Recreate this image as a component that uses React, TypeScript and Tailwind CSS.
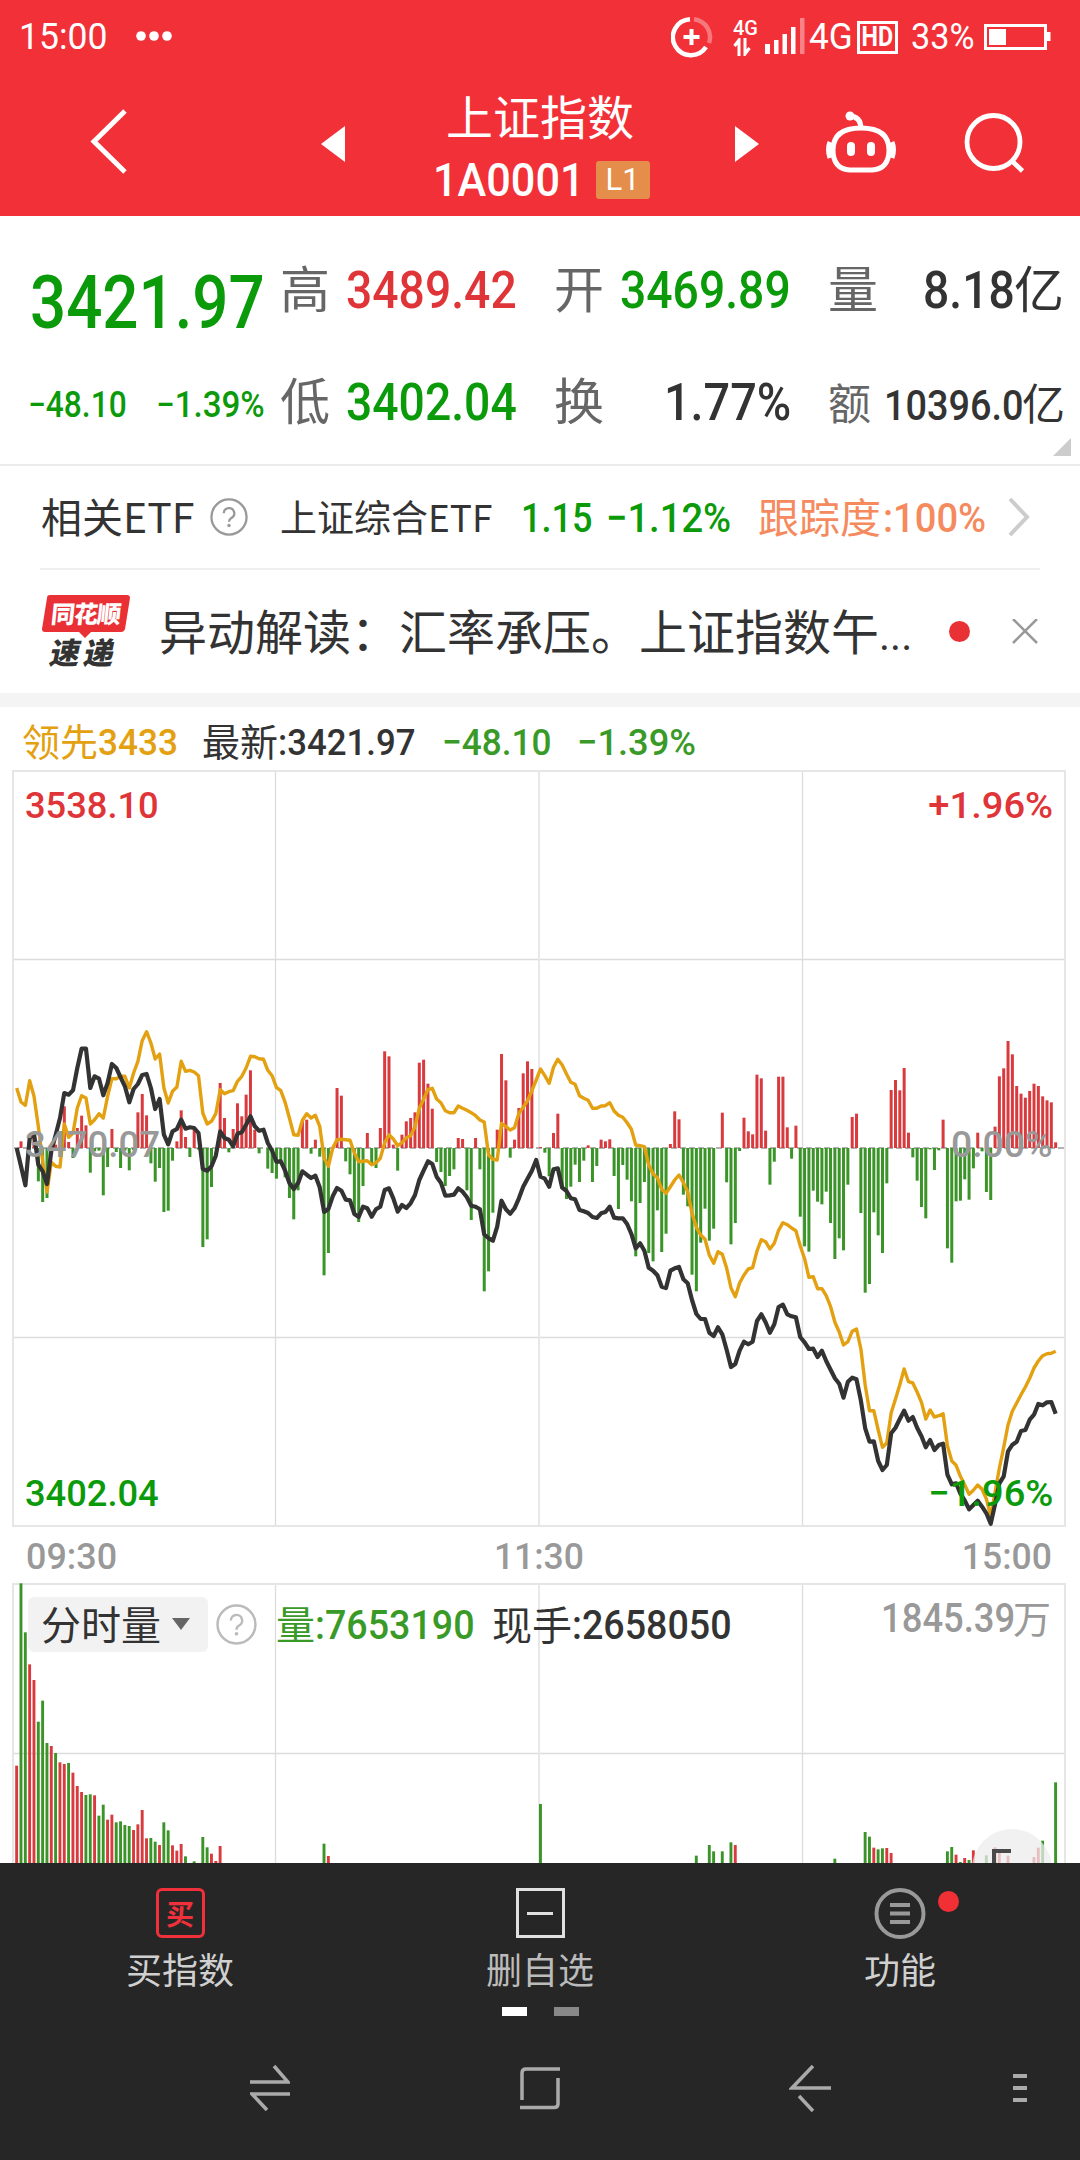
import type { ReactNode } from 'react';
import clsx from 'clsx';

const RED = '#d93a3e';
const GREEN = '#3a9428';
const STEP = 4.329;

// Offsets from the previous close, one value per trading minute, 3 units = 1px.
const momentum = [
  0, 20, 0, 0, 35, -100, -162, -150, -5, 10, 50, 125, 18, -30, 60, 97, 68, -74, -10, -8,
  -142, -57, 57, -12, -60, -8, -67, -6, 107, 162, 98, -46, -101, -60, -192, -188, -38, 20, 113, 33,
  -27, 60, -5, -297, -274, -117, 0, 195, 90, -13, 57, 134, 95, 160, 233, 55, -16, 0, -62, -75,
  -92, -40, -88, -150, -214, -127, 80, 85, -17, 25, -26, -382, -315, 0, 180, 157, -40, -79, -200, -222,
  -114, 45, -45, -60, 60, 290, 275, 10, -68, 40, 80, 90, 107, 256, 265, 193, 118, -42, -72, -114,
  -84, -64, 30, 27, -127, -216, 30, -64, -430, -370, -194, 55, 282, 203, -29, 25, 120, 224, 260, 237,
  0, 3, -14, -85, 45, 103, -120, -153, -116, -50, -102, -38, 8, -102, -54, 25, 20, 26, -84, -183,
  -51, -95, -160, -325, -165, -102, -315, -340, -187, -312, -257, 12, 110, 86, -140, -175, -380, -430, -284, -182,
  -278, -242, 0, 106, -103, -289, -225, -9, 91, 50, 41, 220, 209, 52, -110, -41, 214, 214, 62, -32,
  67, -206, -295, -311, -128, -161, -169, -131, -225, -333, -271, -307, -110, 93, 103, -195, -434, -408, -193, -262,
  -315, -106, 174, 204, 173, 240, 46, -28, -98, -177, -211, -4, -66, -7, 85, -301, -344, -160, -158, -94,
  -155, -61, 46, -10, -132, -156, 64, 215, 239, 321, 281, 186, 163, 151, 171, 193, 186, 155, 143, 137,
  17,
];

const price = [
  0, -55, -112, 30, 43, -50, -70, -108, -10, 40, 90, 165, 160, 173, 240, 298, 298, 180, 215, 208,
  158, 195, 252, 240, 212, 185, 137, 177, 192, 219, 222, 180, 117, 147, 40, 11, 50, 57, 85, 58,
  62, 60, 45, -63, -68, -55, -23, 50, 30, 25, 5, 43, 47, 70, 95, 65, 52, 55, 15, -8,
  -41, -40, -68, -105, -123, -105, -70, -80, -90, -83, -118, -192, -183, -145, -120, -128, -155, -157, -198, -207,
  -176, -181, -206, -184, -176, -126, -121, -151, -191, -171, -180, -166, -141, -96, -68, -40, -48, -86, -104, -143,
  -142, -140, -121, -131, -148, -173, -176, -184, -259, -271, -278, -236, -158, -184, -197, -181, -151, -116, -92, -68,
  -36, -86, -92, -116, -64, -61, -119, -129, -151, -154, -186, -190, -195, -207, -210, -196, -192, -176, -209, -211,
  -211, -228, -258, -301, -286, -308, -359, -368, -382, -416, -420, -368, -361, -357, -394, -406, -456, -498, -513, -513,
  -554, -564, -538, -559, -606, -657, -648, -608, -581, -589, -581, -519, -499, -523, -554, -529, -477, -470, -499, -505,
  -508, -567, -583, -603, -602, -627, -608, -639, -665, -691, -707, -749, -701, -689, -694, -758, -841, -881, -880, -939,
  -966, -951, -856, -839, -813, -788, -818, -807, -839, -865, -898, -876, -906, -891, -887, -980, -1009, -1006, -1037, -1058,
  -1084, -1071, -1058, -1076, -1096, -1127, -1068, -1006, -985, -910, -890, -881, -849, -846, -815, -800, -768, -772, -763, -762,
  -797,
];

const leading = [
  180, 138, 128, 202, 155, 65, -40, -132, -43, -55, -57, 72, 32, 45, 120, 157, 150, 72, 85, 103,
  90, 155, 208, 208, 215, 215, 180, 225, 260, 322, 349, 315, 267, 282, 180, 135, 170, 183, 260, 230,
  233, 228, 217, 105, 72, 80, 103, 175, 163, 169, 172, 200, 215, 240, 275, 274, 268, 266, 233, 217,
  182, 172, 137, 90, 40, 38, 83, 103, 90, 98, 65, -30, -55, 0, 25, 26, 25, 23, -15, -41,
  -40, -38, -50, -44, -31, 16, 40, 27, 7, 16, 31, 37, 64, 119, 146, 176, 179, 147, 136, 112,
  106, 106, 126, 119, 113, 106, 97, 84, 78, -21, -34, -36, 74, 64, 54, 61, 104, 122, 142, 172,
  204, 237, 217, 194, 242, 266, 249, 222, 197, 191, 157, 149, 143, 119, 119, 126, 127, 136, 111, 98,
  92, 76, 56, 9, 7, 4, -51, -78, -89, -124, -136, -116, -96, -81, -104, -131, -196, -238, -261, -274,
  -321, -346, -311, -319, -361, -420, -446, -405, -381, -363, -359, -309, -275, -281, -303, -286, -247, -224, -230, -240,
  -248, -293, -332, -388, -386, -422, -422, -443, -476, -523, -552, -591, -581, -550, -543, -603, -712, -788, -788, -846,
  -898, -885, -794, -753, -710, -663, -701, -705, -732, -763, -813, -786, -807, -803, -797, -893, -939, -952, -985, -1011,
  -1039, -1027, -1011, -1024, -1053, -1104, -1032, -960, -898, -831, -789, -765, -740, -717, -691, -660, -639, -623, -617, -616,
  -610,
];

// [minute, height, rising]
const volume: [number, number, number][] = [
  [0, 292, 1], [1, 839, 0], [2, 692, 0], [3, 596, 1], [4, 549, 1], [5, 424, 0], [6, 487, 0], [7, 360, 0],
  [8, 351, 1], [9, 330, 0], [10, 302, 1], [11, 297, 1], [12, 300, 0], [13, 271, 1], [14, 231, 1], [15, 213, 1],
  [16, 204, 0], [17, 206, 0], [18, 203, 1], [19, 142, 0], [20, 175, 0], [21, 130, 1], [22, 145, 1], [23, 122, 0],
  [24, 125, 0], [25, 114, 0], [26, 111, 0], [27, 99, 1], [28, 116, 1], [29, 159, 1], [30, 74, 1], [31, 75, 0],
  [32, 64, 0], [33, 54, 1], [34, 122, 0], [35, 98, 0], [36, 53, 1], [37, 37, 1], [38, 57, 1], [39, 20, 0],
  [41, 5, 0], [43, 78, 0], [44, 47, 0], [45, 28, 1], [46, 6, 1], [47, 51, 1], [71, 58, 0], [72, 21, 1],
  [121, 177, 0], [157, 22, 0], [160, 54, 0], [161, 35, 0], [163, 35, 0], [165, 62, 0], [166, 54, 1], [189, 13, 0],
  [196, 93, 0], [197, 79, 0], [198, 46, 1], [199, 41, 0], [200, 44, 0], [201, 45, 1], [202, 30, 1], [215, 35, 0],
  [216, 48, 0], [217, 25, 1], [218, 3, 0], [219, 15, 1], [220, 9, 0], [221, 38, 1], [224, 23, 0], [226, 47, 1],
  [227, 30, 1], [229, 22, 1], [235, 18, 1], [236, 46, 1], [237, 67, 0], [240, 242, 0],
];

const toPoints = (values: number[]) =>
  values.map((v, i) => `${(16.7 + i * STEP).toFixed(1)},${(378 - v / 3).toFixed(1)}`).join(' ');

function Num({ className, children }: { className?: string; children: ReactNode }) {
  return (
    <span
      className={clsx(
        'block shrink-0 origin-left whitespace-nowrap font-[Roboto,sans-serif] font-medium',
        className,
      )}
    >
      {children}
    </span>
  );
}

function StatusBar() {
  return (
    <div className="flex h-[74px] items-center pl-[19px] text-white">
      <Num className="w-[117px] scale-x-[0.96] text-[37px] !font-normal">15:00</Num>
      <svg width="36" height="12" fill="#fff">
        <circle cx="5" cy="5" r="4.800" />
        <circle cx="18" cy="5" r="4.800" />
        <circle cx="31" cy="5" r="4.800" />
      </svg>
      <svg className="ml-[499px]" width="42" height="42" fill="none" stroke="#fff" strokeWidth="4.500">
        <path d="M19 3.200A18 18 0 1 0 35 31" />
        <path d="M23 3.200A18 18 0 0 1 38 27" opacity=".35" />
        <path d="M20.500 13v16M12.500 21h16" strokeWidth="4" />
      </svg>
      <div className="ml-[20px] flex w-[32px] flex-col">
        <Num className="w-[25px] scale-x-[0.95] text-[21px] leading-[19px]">4G</Num>
        <svg width="20" height="18" fill="none" stroke="#fff" strokeWidth="3">
          <path d="M6 18V2L1.500 8M12 0V16l4.500-6" />
        </svg>
      </div>
      <svg width="42" height="38" fill="#fff">
        <path d="M0 26h5v10H0zM9 22h4.500v14H9zM17.500 16h4.500v20h-4.500zM26 9h4.500v27H26z" />
        <path d="M35 0h4.500v36H35z" opacity=".4" />
      </svg>
      <Num className="ml-[2px] w-[48px] scale-x-[0.95] text-[37px] !font-normal">4G</Num>
      <div className="flex h-[33px] w-[41px] items-center justify-center border-[3px] border-white">
        <span className="scale-x-[0.86] font-[Roboto] text-[27px] leading-none font-bold">HD</span>
      </div>
      <Num className="ml-[13px] w-[73px] scale-x-[0.95] text-[36px] !font-normal">33%</Num>
      <svg width="67" height="28" fill="none" stroke="#fff" strokeWidth="3">
        <path d="M1.500 2.500h60v23h-60z" />
        <path d="M5 6h17v16H5zM62 9h4.500v9H62z" fill="#fff" stroke="none" />
      </svg>
    </div>
  );
}

function TitleBar() {
  return (
    <div className="flex h-[142px] text-white">
      <svg className="mt-[32px] ml-[88px]" width="40" height="72" fill="none" stroke="#fff" strokeWidth="5">
        <path d="M37 5L6 35.500 37 66" />
      </svg>
      <svg className="mt-[52px] ml-[193px]" width="24" height="36" fill="#fff">
        <path d="M24 0v36L0 18z" />
      </svg>
      <div className="flex w-[390px] flex-col items-center">
        <div className="mt-[11px] h-[60px] text-[47px] leading-[60px]">上证指数</div>
        <div className="mt-[10px] flex h-[50px] w-[215px] items-center">
          <Num className="w-[163px] scale-x-[0.92] text-[47px]">1A0001</Num>
          <div className="flex h-[38px] w-[54px] shrink-0 items-center justify-center rounded-[3px] bg-[#e58e4b] font-[Roboto] text-[31px]">
            L1
          </div>
        </div>
      </div>
      <svg className="mt-[52px]" width="24" height="36" fill="#fff">
        <path d="M0 0v36l24-18z" />
      </svg>
      <svg className="mt-[36px] ml-[66px]" width="72" height="66" fill="none" stroke="#fff" strokeWidth="5">
        <path d="M24 6q12 0 12 13" />
        <circle cx="25" cy="6" r="4.500" fill="#fff" stroke="none" />
        <path d="M36 18q28 0 28 22 0 19-17 20H25Q8 59 8 40q0-22 28-22z" />
        <path d="M5 32q-3 7 0 16M67 32q3 7 0 16" />
        <path d="M26 36v6M46 36v6" strokeWidth="8" strokeLinecap="round" />
      </svg>
      <svg className="mt-[38px] ml-[67px]" width="62" height="62" fill="none" stroke="#fff" strokeWidth="4.800">
        <circle cx="29.500" cy="30" r="26.500" />
        <path d="M48 49l10.500 10" />
      </svg>
    </div>
  );
}

function Quote() {
  return (
    <section className="relative h-[250px] border-b-2 border-[#ebebeb] text-[#666]">
      <div className="flex h-[120px] pt-[45px] pl-[28px] text-[50px] leading-[60px]">
        <Num className="mt-[12px] ml-[2px] w-[250px] scale-x-[0.86] text-[74px] text-[#0a9a0a]">3421.97</Num>
        <span className="-mt-[5px] w-[66px] shrink-0">高</span>
        <Num className="w-[208px] scale-x-[0.89] text-[52px] text-[#e03538]">3489.42</Num>
        <span className="-mt-[5px] w-[66px] shrink-0">开</span>
        <Num className="w-[208px] scale-x-[0.89] text-[52px] text-[#0a9a0a]">3469.89</Num>
        <span className="-mt-[5px] w-[95px] shrink-0">量</span>
        <Num className="w-[91px] scale-x-[0.89] text-[52px] text-[#333]">8.18</Num>
        <span className="-mt-[5px] text-[#333]">亿</span>
      </div>
      <div className="flex h-[120px] pt-[37px] pl-[28px] text-[50px] leading-[60px]">
        <Num className="mt-[2px] w-[128px] scale-x-[0.88] text-[36px] text-[#0a9a0a]">−48.10</Num>
        <Num className="mt-[2px] w-[124px] scale-x-[0.92] text-[36px] text-[#0a9a0a]">−1.39%</Num>
        <span className="-mt-[5px] w-[66px] shrink-0">低</span>
        <Num className="w-[208px] scale-x-[0.89] text-[52px] text-[#0a9a0a]">3402.04</Num>
        <span className="-mt-[5px] w-[110px] shrink-0">换</span>
        <Num className="w-[164px] scale-x-[0.9] text-[52px] text-[#333]">1.77%</Num>
        <span className="-mt-[2px] w-[56px] shrink-0 text-[43px]">额</span>
        <Num className="mt-[2px] w-[138px] scale-x-[0.88] text-[43px] text-[#333]">10396.0</Num>
        <span className="-mt-[2px] text-[43px] text-[#333]">亿</span>
      </div>
      <svg className="absolute right-[9px] bottom-[8px]" width="18" height="18" fill="#ccc">
        <path d="M18 0v18H0z" />
      </svg>
    </section>
  );
}

function Help({ size, color }: { size: number; color: string }) {
  return (
    <svg className="shrink-0" width={size} height={size} viewBox="0 0 40 40" fill="none" stroke={color} strokeWidth="2.400">
      <circle cx="20" cy="20" r="18.500" />
      <path d="M14.500 16a5.500 5.500 0 1 1 8 5q-2.500 1.500-2.500 4" />
      <circle cx="20" cy="29" r="1.800" fill={color} stroke="none" />
    </svg>
  );
}

function EtfRow() {
  return (
    <div className="ml-[40px] flex h-[104px] w-[1000px] shrink-0 items-center border-b-2 border-[#efefef] text-[#333]">
      <div className="-mt-[2px] w-[170px] pl-[1px] text-[41px]">相关ETF</div>
      <Help size={38} color="#999" />
      <div className="ml-[32px] w-[241px] text-[37px] whitespace-nowrap">上证综合ETF</div>
      <Num className="mt-[3px] w-[85px] scale-x-[0.88] text-[41px] text-[#0a9a0a]">1.15</Num>
      <Num className="mt-[3px] w-[152px] scale-x-[0.93] text-[41px] text-[#0a9a0a]">−1.12%</Num>
      <div className="flex w-[250px] items-center text-[41px] text-[#f58a5e]">
        <span className="-mt-[2px]">跟踪度</span>
        <Num className="mt-[3px] ml-[2px] scale-x-[0.93] text-[41px]">:100%</Num>
      </div>
      <svg className="shrink-0" width="24" height="40" fill="none" stroke="#ccc" strokeWidth="4">
        <path d="M2 2l17 18L2 38" />
      </svg>
    </div>
  );
}

function NewsRow() {
  return (
    <div className="flex h-[123px] shrink-0 items-center pl-[42px] text-[#333]">
      <div className="relative h-[74px] w-[88px] shrink-0 leading-none font-black">
        <svg className="absolute top-0 left-0" width="88" height="44" fill="#e83035">
          <path d="M8 0h77q3 0 3 3l-5 31q-1 3-4 3H49l-6 6-6-6H3q-3 0-3-3L5 3q0-3 3-3z" />
        </svg>
        <div className="relative -skew-x-6 pt-[6px] text-center text-[24px] tracking-[-1px] text-white">同花顺</div>
        <div className="relative mt-[11px] -skew-x-12 pl-[9px] text-[30px] tracking-[4px]">速递</div>
      </div>
      <div className="-mt-[4px] ml-[29px] w-[776px] text-[48px] whitespace-nowrap">
        异动解读：汇率承压。上证指数午<span className="font-[Roboto] text-[42px]">...</span>
      </div>
      <div className="-mt-[1px] ml-[14px] h-[21px] w-[21px] shrink-0 rounded-full bg-[#e83035]" />
      <svg className="ml-[42px] shrink-0" width="26" height="26" fill="none" stroke="#999" strokeWidth="2.500">
        <path d="M1 0l24 24M25 0L1 24" />
      </svg>
    </div>
  );
}

function MinuteChart() {
  return (
    <div className="relative h-[757px] shrink-0">
      <svg width="1080" height="757" fill="none">
        <path d="M275.500 1v756M802.500 1v756M13 189.500h1052M13 567.500h1052" stroke="#dcdcdc" strokeWidth="1.300" />
        <path d="M539 1v756" stroke="#e8e8e8" strokeWidth="2" />
        <path d="M13 1h1052v755H13z" stroke="#e6e6e6" strokeWidth="2" />
        <path d="M14 378h1050" stroke="#999" strokeWidth="1.300" strokeDasharray="6 3" />
        {momentum.map((v, i) => (
          <rect
            key={i}
            x={15.2 + i * STEP}
            y={v > 0 ? 378 - v / 3 : 378}
            width="3"
            height={Math.abs(v) / 3}
            fill={v > 0 ? RED : GREEN}
          />
        ))}
        <polyline points={toPoints(leading)} stroke="#e3a010" strokeWidth="3.400" strokeLinejoin="round" />
        <polyline points={toPoints(price)} stroke="#333" strokeWidth="4.200" strokeLinejoin="round" />
      </svg>
      <div className="absolute inset-0 flex flex-col justify-between pt-[15px] pr-[27px] pb-[12px] pl-[25px] text-[37px] leading-[42px]">
        <div className="flex justify-between">
          <Num className="scale-x-[0.98] text-[#e03538]">3538.10</Num>
          <Num className="!origin-right scale-x-[1.03] text-[#e03538]">+1.96%</Num>
        </div>
        <div className="-mt-[11px] flex justify-between text-[#999]">
          <Num className="scale-x-[0.99]">3470.07</Num>
          <Num className="!origin-right scale-x-[1.01]">0.00%</Num>
        </div>
        <div className="flex justify-between text-[#0a9a0a]">
          <Num className="scale-x-[0.98]">3402.04</Num>
          <Num className="!origin-right scale-x-[1.03]">−1.96%</Num>
        </div>
      </div>
    </div>
  );
}

function VolumeChart() {
  return (
    <div className="relative h-[280px] shrink-0 overflow-hidden">
      <svg width="1080" height="280" fill="none">
        <path d="M275.500 1v279M802.500 1v279M13 170.500h1052" stroke="#dcdcdc" strokeWidth="1.300" />
        <path d="M539 1v279" stroke="#e8e8e8" strokeWidth="2" />
        <path d="M13 280V1h1052v279" stroke="#e6e6e6" strokeWidth="2" />
        {volume.map(([i, h, up]) => (
          <rect
            key={i}
            x={15.2 + i * STEP}
            y={280 - h / 3}
            width="2.900"
            height={h / 3}
            fill={up ? RED : GREEN}
          />
        ))}
      </svg>
      <div className="absolute inset-x-0 top-[14px] flex h-[55px] items-center pl-[28px] text-[40px] text-[#333]">
        <div className="flex h-[55px] w-[180px] shrink-0 items-center rounded-[6px] bg-[#f2f2f2] pl-[13px] leading-[48px]">
          <span className="-mt-[4px]">分时量</span>
          <svg className="ml-[11px]" width="18" height="13" fill="#666">
            <path d="M0 0h18l-9 12z" />
          </svg>
        </div>
        <div className="ml-[8px] w-[60px]">
          <Help size={41} color="#bbb" />
        </div>
        <div className="flex w-[216px] items-center text-[39px] text-[#3a9a28]">
          <span className="-mt-[4px]">量</span>
          <Num className="mt-[2px] scale-x-[0.94] text-[40px]">:7653190</Num>
        </div>
        <div className="flex w-[389px] items-center text-[40px]">
          <span className="-mt-[4px]">现手</span>
          <Num className="mt-[2px] scale-x-[0.94] text-[40px]">:2658050</Num>
        </div>
        <div className="-mt-[14px] flex items-center text-[38px] text-[#999]">
          <Num className="mt-[2px] w-[132px] scale-x-[0.91] text-[40px]">1845.39</Num>
          <span className="-mt-[3px]">万</span>
        </div>
      </div>
      <div className="absolute top-[246px] left-[972px] h-[80px] w-[80px] rounded-full bg-[#ececec]/75 pt-[20px] pl-[20px]">
        <div className="h-[30px] w-[19px] border-t-[4px] border-l-[4px] border-[#4a4a4a]" />
      </div>
    </div>
  );
}

function Toolbar() {
  return (
    <div className="grid grid-cols-3 pt-[25px] text-[36px] leading-[48px] text-[#d0d0d0]">
      <div className="flex flex-col items-center">
        <div className="mb-[6px] flex h-[50px] w-[49px] items-center justify-center rounded-[6px] border-[3px] border-[#f0303a] text-[28px] leading-none font-bold text-[#f0303a]">
          买
        </div>
        买指数
      </div>
      <div className="flex flex-col items-center">
        <div className="mb-[6px] flex h-[50px] w-[49px] items-center justify-center border-[3px] border-[#e0e0e0]">
          <div className="h-[3px] w-[26px] bg-[#e0e0e0]" />
        </div>
        <span className="text-[#bbb]">删自选</span>
      </div>
      <div className="relative flex flex-col items-center">
        <svg className="mb-[4px]" width="52" height="52" fill="none" stroke="#999" strokeWidth="4">
          <circle cx="26" cy="25.500" r="23.500" />
          <path d="M16 17h20M16 25.500h20M16 34h20" />
        </svg>
        功能
        <div className="absolute top-[3px] left-[218px] h-[21px] w-[21px] rounded-full bg-[#f03035]" />
      </div>
    </div>
  );
}

function SystemNav() {
  return (
    <div className="flex h-[144px] items-center pl-[250px]">
      <svg width="40" height="48" fill="none" stroke="#aaa" strokeWidth="3.500">
        <path d="M0 18h38L24 2M40 30H2l15 16" />
      </svg>
      <svg className="ml-[230px]" width="40" height="44" fill="none" stroke="#aaa" strokeWidth="3.500">
        <path d="M2 34V7q0-4 4-4h34M38 12v26q0 3.500-4 3.500H0" />
      </svg>
      <svg className="ml-[229px]" width="42" height="50" fill="none" stroke="#aaa" strokeWidth="3.500">
        <path d="M42 25H3L24 3M10 33l14 15" />
      </svg>
      <svg className="ml-[182px]" width="14" height="30" fill="#aaa">
        <path d="M0 1h14v4H0zM0 13h14v4H0zM0 25h14v4H0z" />
      </svg>
    </div>
  );
}

export default function App() {
  return (
    <div className="flex h-[2160px] w-[1080px] flex-col overflow-hidden bg-white font-['Noto_Sans_CJK_SC',sans-serif]">
      <header className="h-[216px] shrink-0 bg-[#f23038]">
        <StatusBar />
        <TitleBar />
      </header>
      <Quote />
      <EtfRow />
      <NewsRow />
      <div className="h-[14px] shrink-0 bg-[#f4f4f4]" />
      <div className="flex h-[63px] shrink-0 items-center pt-[7px] pl-[22px] text-[38px] leading-[48px] text-[#333]">
        <div className="flex w-[180px] items-center text-[#e3a010]">
          <span className="-mt-[4px]">领先</span>
          <Num className="mt-[1px] scale-x-[0.95] text-[37px]">3433</Num>
        </div>
        <div className="flex w-[240px] items-center">
          <span className="-mt-[4px]">最新</span>
          <Num className="mt-[1px] scale-x-[0.94] text-[37px]">:3421.97</Num>
        </div>
        <Num className="mt-[1px] w-[135px] scale-x-[0.95] text-[37px] text-[#3a9a28]">−48.10</Num>
        <Num className="mt-[1px] scale-x-[0.98] text-[37px] text-[#3a9a28]">−1.39%</Num>
      </div>
      <MinuteChart />
      <div className="flex h-[56px] shrink-0 items-center justify-between pt-[3px] pr-[28px] pl-[26px] text-[37px] text-[#999]">
        <Num className="scale-x-[0.97]">09:30</Num>
        <Num className="!origin-center scale-x-[0.96]">11:30</Num>
        <Num className="!origin-right scale-x-[0.96]">15:00</Num>
      </div>
      <VolumeChart />
      <footer className="flex-1 bg-[#262626]">
        <Toolbar />
        <div className="mt-[15px] flex h-[9px] justify-center gap-[27px]">
          <div className="w-[25px] bg-white" />
          <div className="w-[25px] bg-[#888]" />
        </div>
        <SystemNav />
      </footer>
    </div>
  );
}
